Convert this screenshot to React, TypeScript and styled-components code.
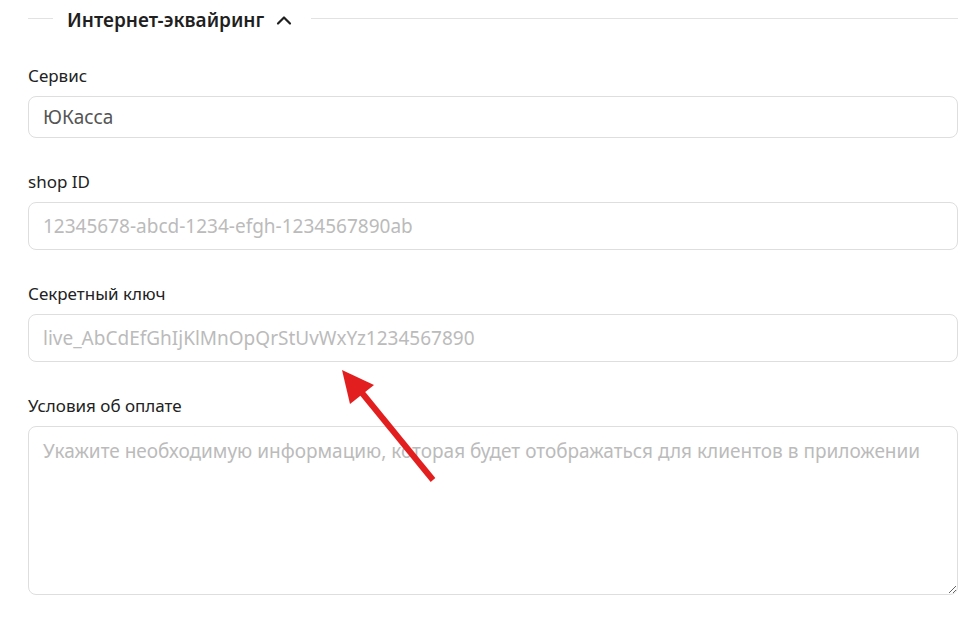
import styled, { createGlobalStyle } from "styled-components";

const GlobalStyle = createGlobalStyle`
  html, body {
    margin: 0;
    padding: 0;
    background: #ffffff;
  }
  * {
    box-sizing: border-box;
  }
  body {
    font-family: "Noto Sans", "Open Sans", sans-serif;
    color: #222222;
  }
`;

const Page = styled.div`
  position: relative;
  width: 976px;
  height: 627px;
  padding: 0 18px 0 28px;
  overflow: hidden;
`;

const Section = styled.section`
  display: flex;
  flex-direction: column;
`;

const SectionHeader = styled.div`
  display: flex;
  align-items: center;
  height: 40px;
  margin-bottom: 24px;
  cursor: pointer;
`;

const Rule = styled.div<{ $grow?: boolean }>`
  height: 1px;
  background: #e2e2e2;
  width: ${(p) => (p.$grow ? "auto" : "25px")};
  flex: ${(p) => (p.$grow ? "1" : "none")};
  margin-top: -3px;
`;

const SectionTitle = styled.h2`
  margin: 0 18px 0 14px;
  display: flex;
  align-items: center;
  gap: 11px;
  font-size: 19px;
  font-weight: 600;
  color: #1f1f1f;
  line-height: 24px;
  white-space: nowrap;

  svg {
    width: 18px;
    height: 18px;
  }
`;

const Fields = styled.div`
  display: flex;
  flex-direction: column;
  gap: 32px;
`;

const Field = styled.label`
  display: flex;
  flex-direction: column;
  gap: 9px;
`;

const FieldLabel = styled.span`
  font-size: 17px;
  line-height: 23px;
  color: #222222;
`;

const TextInput = styled.input<{ $height: number }>`
  width: 100%;
  height: ${(p) => p.$height}px;
  padding: 0 14px;
  border: 1px solid #dedede;
  border-radius: 8px;
  font-family: inherit;
  font-size: 19px;
  color: #555555;
  background: #ffffff;
  outline: none;

  &::placeholder {
    color: #bbbbbb;
  }
`;

const TextArea = styled.textarea`
  width: 100%;
  height: 169px;
  padding: 11px 14px;
  border: 1px solid #dedede;
  border-radius: 8px;
  font-family: inherit;
  font-size: 19px;
  line-height: 26px;
  color: #555555;
  background: #ffffff;
  outline: none;
  resize: vertical;
  display: block;

  &::placeholder {
    color: #bbbbbb;
  }
`;

const Arrow = styled.svg`
  position: absolute;
  left: 0;
  top: 0;
  pointer-events: none;
`;

function ChevronUp() {
  return (
    <svg viewBox="0 0 18 18" fill="none">
      <path d="M3 12.5 L9 6.5 L15 12.5" stroke="#1f1f1f" strokeWidth="2.2" strokeLinecap="round" strokeLinejoin="round" />
    </svg>
  );
}

export default function App() {
  return (
    <>
      <GlobalStyle />
      <Page>
        <Section>
          <SectionHeader>
            <Rule />
            <SectionTitle>
              Интернет-эквайринг
              <ChevronUp />
            </SectionTitle>
            <Rule $grow />
          </SectionHeader>
          <Fields>
            <Field>
              <FieldLabel>Сервис</FieldLabel>
              <TextInput $height={42} defaultValue="ЮКасса" readOnly />
            </Field>
            <Field>
              <FieldLabel>shop ID</FieldLabel>
              <TextInput $height={48} placeholder="12345678-abcd-1234-efgh-1234567890ab" />
            </Field>
            <Field>
              <FieldLabel>Секретный ключ</FieldLabel>
              <TextInput $height={48} placeholder="live_AbCdEfGhIjKlMnOpQrStUvWxYz1234567890" />
            </Field>
            <Field>
              <FieldLabel>Условия об оплате</FieldLabel>
              <TextArea placeholder="Укажите необходимую информацию, которая будет отображаться для клиентов в приложении" />
            </Field>
          </Fields>
        </Section>
        <Arrow width="976" height="627" viewBox="0 0 976 627">
          <line x1="433" y1="480" x2="358" y2="388" stroke="#e31e1e" strokeWidth="6" />
          <polygon points="342,370 374,385 350,404" fill="#e31e1e" />
        </Arrow>
      </Page>
    </>
  );
}
